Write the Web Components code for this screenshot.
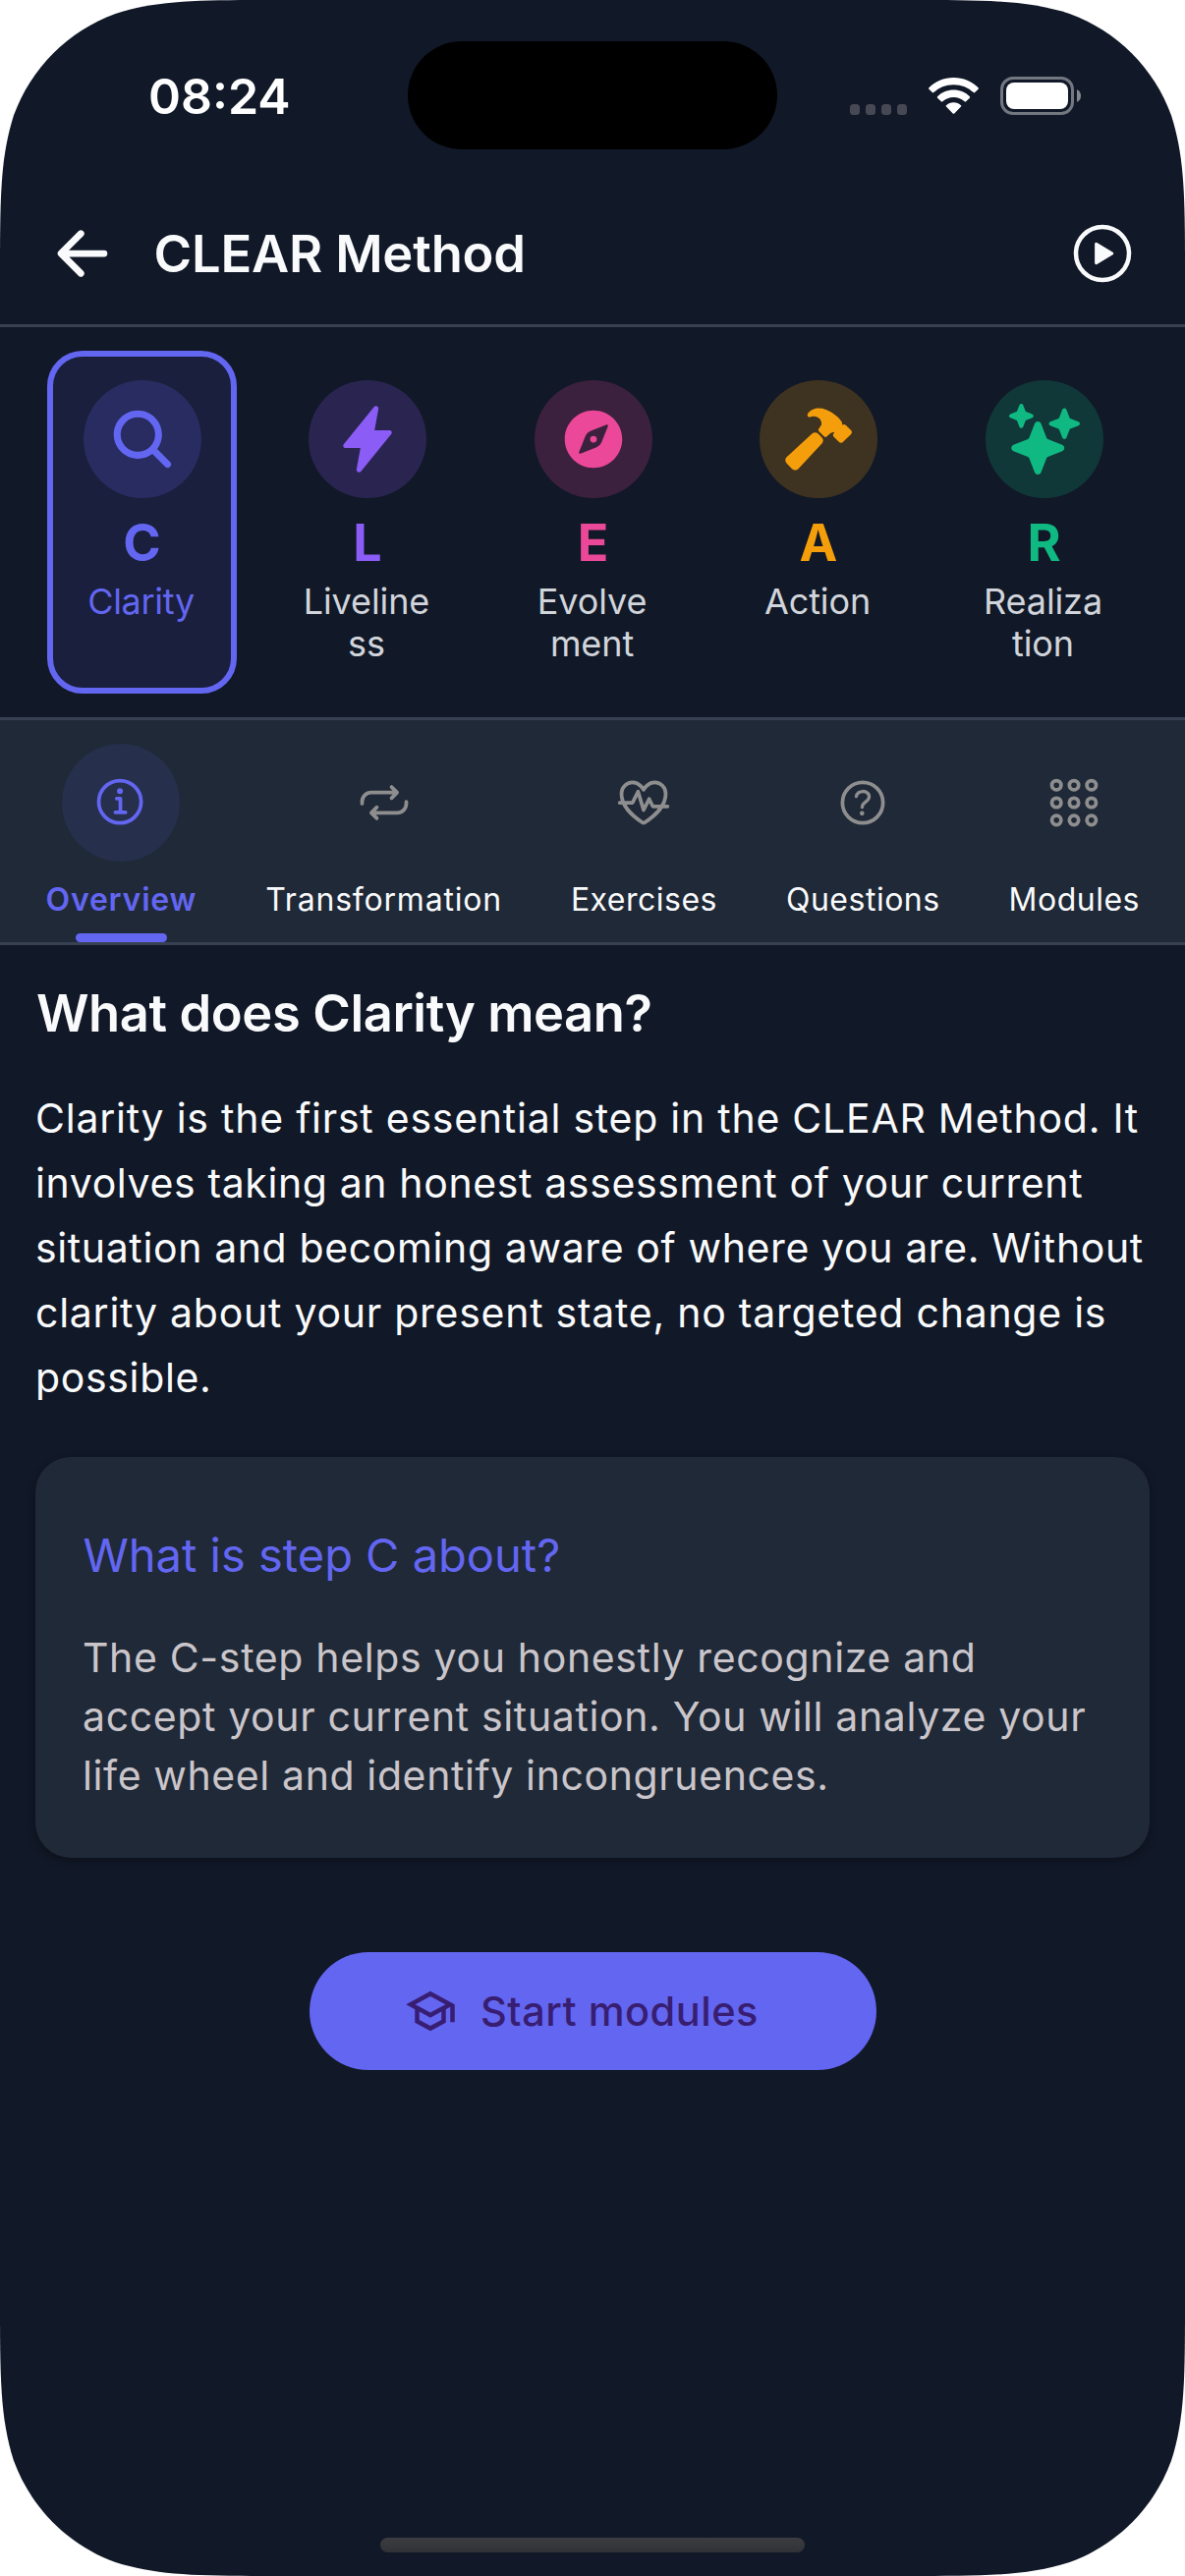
<!DOCTYPE html>
<html lang="en">
<head>
<meta charset="utf-8">
<title>CLEAR Method</title>
<style>
html, body { margin: 0; background: #fff; }
body { width: 1206px; height: 2622px; overflow: hidden; font-family: Inter, "Liberation Sans", sans-serif; }
.line { display: block; white-space: nowrap; }
</style>
</head>
<body>
<phone-screen>
  <status-bar slot="top" time="08:24"></status-bar>
  <app-header slot="top">CLEAR Method</app-header>
  <step-bar slot="top">
    <step-card icon="search" letter="C" color="#6366f1" active>Clarity</step-card>
    <step-card icon="flash" letter="L" color="#8b5cf6">Liveline<br>ss</step-card>
    <step-card icon="compass" letter="E" color="#ec4899">Evolve<br>ment</step-card>
    <step-card icon="hammer" letter="A" color="#f59e0b">Action</step-card>
    <step-card icon="sparkles" letter="R" color="#10b981">Realiza<br>tion</step-card>
  </step-bar>
  <tab-strip slot="top">
    <tab-item icon="info" active>Overview</tab-item>
    <tab-item icon="repeat" style="letter-spacing:.79px">Transformation</tab-item>
    <tab-item icon="fitness">Exercises</tab-item>
    <tab-item icon="help">Questions</tab-item>
    <tab-item icon="apps">Modules</tab-item>
  </tab-strip>
  <content-section heading="What does Clarity mean?">
    <span class="line" style="letter-spacing:.75px">Clarity is the first essential step in the CLEAR Method. It</span>
    <span class="line" style="letter-spacing:.62px">involves taking an honest assessment of your current</span>
    <span class="line" style="letter-spacing:.62px">situation and becoming aware of where you are. Without</span>
    <span class="line" style="letter-spacing:.74px">clarity about your present state, no targeted change is</span>
    <span class="line" style="letter-spacing:.65px">possible.</span>
  </content-section>
  <info-card heading="What is step C about?">
    <span class="line" style="letter-spacing:.65px">The C-step helps you honestly recognize and</span>
    <span class="line" style="letter-spacing:.63px">accept your current situation. You will analyze your</span>
    <span class="line" style="letter-spacing:.61px">life wheel and identify incongruences.</span>
  </info-card>
  <pill-button icon="school">Start modules</pill-button>
</phone-screen>

<script>
const define = (name, render) => customElements.define(name, class extends HTMLElement {
  connectedCallback() {
    if (this.shadowRoot) return;
    this.attachShadow({ mode: "open" }).innerHTML = render(this);
  }
});

const line = (w, body) => `<g fill="none" stroke="currentColor" stroke-width="${w}" stroke-linecap="round" stroke-linejoin="round">${body}</g>`;
const ICONS = {
  back: line(48, `<path d="M244 400L100 256l144-144M120 256h292"/>`),
  play: line(32, `<path d="M448 256c0-106-86-192-192-192S64 150 64 256s86 192 192 192 192-86 192-192z"/>`) +
    `<path d="M216.32 334.44l114.45-69.14a10.89 10.89 0 000-18.6l-114.45-69.14a10.78 10.78 0 00-16.32 9.31v138.26a10.78 10.78 0 0016.32 9.31z"/>`,
  search: `<path d="M456.69 421.39L362.6 327.3a173.81 173.81 0 0034.84-104.58C397.44 126.38 319.06 48 222.72 48S48 126.38 48 222.72s78.38 174.72 174.72 174.72A173.81 173.81 0 00327.3 362.6l94.09 94.09a25 25 0 0035.3-35.3zM97.92 222.72a124.8 124.8 0 11124.8 124.8 124.95 124.95 0 01-124.8-124.8z"/>`,
  flash: `<path d="M194.82 496a18.36 18.36 0 01-18.1-21.53v-.11L204.83 320H96a16 16 0 01-12.44-26.06L302.73 23a18.45 18.45 0 0132.8 13.71c0 .3-.08.59-.13.89L307.19 192H416a16 16 0 0112.44 26.06L209.24 489a18.45 18.45 0 01-14.42 7z"/>`,
  compass: `<circle cx="256" cy="256" r="24"/><path d="M256 48C141.31 48 48 141.31 48 256s93.31 208 208 208 208-93.31 208-208S370.69 48 256 48zm105.07 113.33l-46.88 117.2a64 64 0 01-35.66 35.66l-117.2 46.88a8 8 0 01-10.4-10.4l46.88-117.2a64 64 0 0135.66-35.66l117.2-46.88a8 8 0 0110.4 10.4z"/>`,
  hammer: `<path d="M280.16 242.79l-26.11-26.12a32 32 0 00-45.14-.12L27.38 384.08c-6.61 6.23-10.95 14.17-11.35 23.06a32.11 32.11 0 009.21 23.94l39 39.43a.46.46 0 00.07.07A32.29 32.29 0 0087 480h1.18c8.89-.33 17-4.64 23.32-11.26l168.68-180.8a32 32 0 00-.02-45.15z"/><path d="M490 190l-.31-.31-34.27-33.92a21.46 21.46 0 00-15.28-6.26 21.89 21.89 0 00-12.79 4.14c0-.43.06-.85.09-1.22.45-6.5 1.15-16.32-5.2-25.22a258 258 0 00-24.8-28.74.6.6 0 00-.08-.08c-13.32-13.12-42.31-37.83-86.72-55.94A139.55 139.55 0 00257.56 32C226 32 202 46.24 192.81 54.68a119.92 119.92 0 00-14.18 16.22 16 16 0 0018.65 24.34 74.45 74.45 0 018.58-2.63 63.46 63.46 0 0118.45-1.15c13.19 1.09 28.79 7.64 35.69 13.09 11.7 9.41 17.33 22.09 18.26 41.09.18 3.82-7.72 18.14-20 34.48a16 16 0 001.45 21l34.41 34.41a16 16 0 0022 .62c9.73-8.69 24.55-21.79 29.73-25 7.69-4.73 13.19-5.64 14.7-5.8a19.18 19.18 0 0111.29 2.38 1.24 1.24 0 01-.31.95l-1.82 1.73-.3.28a21.52 21.52 0 00.05 31.54l34.26 33.91a21.45 21.45 0 0015.28 6.25 21.7 21.7 0 0015.22-6.2l55.5-54.82c.19-.19.38-.39.56-.59A21.87 21.87 0 00490 190z"/>`,
  sparkles: `<path d="M208 512a24.84 24.84 0 01-23.34-16l-39.84-103.6a16.06 16.06 0 00-9.19-9.19L32 343.34a25 25 0 010-46.68l103.6-39.84a16.06 16.06 0 009.19-9.19L184.66 144a25 25 0 0146.68 0l39.84 103.6a16.06 16.06 0 009.19 9.19l103 39.63A25.49 25.49 0 01400 320.52a24.82 24.82 0 01-16 22.82l-103.6 39.84a16.06 16.06 0 00-9.19 9.19L231.34 496A24.84 24.84 0 01208 512zM88 176a14.67 14.67 0 01-13.69-9.4l-16.86-43.84a7.28 7.28 0 00-4.21-4.21L9.4 101.69a14.67 14.67 0 010-27.38l43.84-16.86a7.31 7.31 0 004.21-4.21L74.16 9.79A15 15 0 0186.23.11a14.67 14.67 0 0115.46 9.29l16.86 43.84a7.31 7.31 0 004.21 4.21l43.84 16.86a14.67 14.67 0 010 27.38l-43.84 16.86a7.28 7.28 0 00-4.21 4.21l-16.86 43.84A14.67 14.67 0 0188 176zM400 256a16 16 0 01-14.93-10.26l-22.84-59.37a8 8 0 00-4.6-4.6l-59.37-22.84a16 16 0 010-29.86l59.37-22.84a8 8 0 004.6-4.6l22.67-58.95a16.45 16.45 0 0113.17-10.57 16 16 0 0116.86 10.15l22.84 59.37a8 8 0 004.6 4.6l59.37 22.84a16 16 0 010 29.86l-59.37 22.84a8 8 0 00-4.6 4.6l-22.84 59.37A16 16 0 01400 256z"/>`,
  info: line(32, `<circle cx="248" cy="248" r="184"/><path d="M220 220h32v116M208 340h88"/>`) + `<circle cx="248" cy="156" r="26"/>`,
  repeat: line(32, `<path d="M320 120l48 48-48 48M352 168H144a80.24 80.24 0 00-80 80v16M192 392l-48-48 48-48M160 344h208a80.24 80.24 0 0080-80v-16"/>`),
  fitness: line(32, `<path d="M352.92 80C288 80 256 144 256 144s-32-64-96.92-64c-52.76 0-94.54 44.14-95.08 96.81-1.1 109.33 86.73 187.08 183 252.42a16 16 0 0018 0c96.26-65.34 184.09-143.09 183-252.42-.54-52.67-42.32-96.81-95.08-96.81zM48 256h112l48-96 48 160 48-96 32 64h128"/>`),
  help: line(28, `<circle cx="256" cy="256" r="176" stroke-width="32"/><path d="M200 202.29s.84-17.5 19.57-32.57C230.68 160.77 244 158.18 256 158c10.93-.14 20.69 1.67 26.53 4.45 10 4.76 29.47 16.38 29.47 41.09 0 26-17 37.81-36.37 50.8S251 281.43 251 296"/>`) + `<circle cx="250" cy="348" r="20"/>`,
  apps: line(32, [104, 256, 408].map(y => [104, 256, 408].map(x => `<circle cx="${x}" cy="${y}" r="40"/>`).join("")).join("")),
  school: `<g transform="scale(21.333)"><path d="M12 3L1 9l4 2.18v6L12 21l7-3.82v-6l2-1.09V17h2V9L12 3m6.82 6L12 12.72 5.18 9 12 5.28 18.82 9M17 16l-5 2.72L7 16v-3.73L12 15l5-2.73V16z"/></g>`
};

define("ui-icon", el => `
<style>:host{display:block;width:var(--size,72px);height:var(--size,72px);flex:none}svg{display:block;width:100%;height:100%}</style>
<svg viewBox="0 0 512 512" fill="currentColor">${ICONS[el.getAttribute("name")]}</svg>`);

define("phone-screen", () => {
  const w = 1206, h = 2622, r = 186;
  const a = 1.52866 * r, b = 1.08849 * r, c = .86841 * r, d = .63149 * r, e = .07491 * r, f = .37282 * r, g = .16906 * r;
  const path = `M${a} 0H${w - a}C${w - b} 0 ${w - c} 0 ${w - d} ${e}C${w - f} ${g} ${w - g} ${f} ${w - e} ${d}C${w} ${c} ${w} ${b} ${w} ${a}` +
    `V${h - a}C${w} ${h - b} ${w} ${h - c} ${w - e} ${h - d}C${w - g} ${h - f} ${w - f} ${h - g} ${w - d} ${h - e}C${w - c} ${h} ${w - b} ${h} ${w - a} ${h}` +
    `H${a}C${b} ${h} ${c} ${h} ${d} ${h - e}C${f} ${h - g} ${g} ${h - f} ${e} ${h - d}C0 ${h - c} 0 ${h - b} 0 ${h - a}` +
    `V${a}C0 ${b} 0 ${c} ${e} ${d}C${g} ${f} ${f} ${g} ${d} ${e}C${c} 0 ${b} 0 ${a} 0Z`;
  return `
<style>
:host{display:flex;flex-direction:column;width:${w}px;height:${h}px;background:#111827;color:#f9fafb;clip-path:path("${path}")}
main{flex:1;padding:36px 36px 0;display:flex;flex-direction:column}
footer{padding-bottom:24px;display:flex;justify-content:center}
.home{width:432px;height:15px;border-radius:8px;background:linear-gradient(#3c3c40,#303237)}
</style>
<slot name="top"></slot>
<main><slot></slot></main>
<footer><div class="home"></div></footer>`;
});

define("status-bar", el => `
<style>
:host{display:grid;grid-template-columns:415px 376px 1fr;height:184px;align-items:start}
.time{margin:68px 0 0 151px;font-size:50px;font-weight:600;line-height:60px;color:#fff}
.island{margin-top:42px;height:110px;border-radius:55px;background:#000}
.right{display:flex;align-items:flex-start;padding:78px 0 0 74px}
.dots{display:flex;gap:6px;margin-top:28px}
.dots i{width:10px;height:11px;border-radius:3.5px;background:#464853}
svg{display:block}
.wifi{margin:1px 0 0 22px}.battery{margin-left:22px}
</style>
<div class="time">${el.getAttribute("time")}</div>
<div class="island"></div>
<div class="right">
  <div class="dots"><i></i><i></i><i></i><i></i></div>
  <svg class="wifi" width="51" height="37" viewBox="0 0 51 37" fill="#fff">
    <path d="M25.5 0C35.4 0 44.3 3.9 50.6 10.2Q51.3 11 50.6 11.7L47.2 15.1Q46.5 15.8 45.7 15.1C40.500 10.2 33.4 7.2 25.500 7.2S10.500 10.2 5.3 15.1Q4.5 15.8 3.8 15.1L.4 11.7Q-.3 11 .4 10.2C6.7 3.9 15.6 0 25.500 0Z"/>
    <path d="M25.5 12.6C31.9 12.6 37.7 15.1 41.9 19.2Q42.6 20 41.9 20.7L38.1 24.3Q37.4 25 36.7 24.3C33.7 21.5 29.8 19.9 25.5 19.9S17.3 21.5 14.3 24.3Q13.6 25 12.9 24.3L9.1 20.7Q8.4 20 9.1 19.2C13.3 15.1 19.1 12.6 25.5 12.6Z"/>
    <path d="M25.5 25.3C28.4 25.3 31.1 26.4 33 28.2Q33.6 28.9 33 29.5L26.3 36.4Q25.5 37.2 24.7 36.4L18 29.5Q17.4 28.9 18 28.2C19.9 26.4 22.6 25.3 25.5 25.3Z"/>
  </svg>
  <svg class="battery" width="83" height="39" viewBox="0 0 83 39">
    <rect x="1.5" y="1.5" width="72" height="36" rx="11.5" fill="none" stroke="#737780" stroke-width="3"/>
    <rect x="6" y="6" width="63" height="27" rx="8" fill="#fff"/>
    <path d="M78 13Q82 15 82 19.5T78 26Z" fill="#858890"/>
  </svg>
</div>`);

define("app-header", () => `
<style>
:host{display:flex;align-items:center;box-sizing:border-box;height:149px;padding:1px 48px 0;border-bottom:3px solid #374151}
.title{flex:1;margin-left:36.5px;font-size:52.5px;font-weight:600;letter-spacing:-.2px;line-height:66px}
</style>
<ui-icon name="back"></ui-icon><div class="title"><slot></slot></div><ui-icon name="play"></ui-icon>`);

define("step-bar", () => `
<style>:host{display:flex;justify-content:space-between;box-sizing:border-box;height:400px;padding:24px 47px 24px 48px;border-bottom:3px solid #374151}</style>
<slot></slot>`);

define("step-card", el => {
  const color = el.getAttribute("color");
  return `
<style>
:host{display:flex;flex-direction:column;align-items:center;box-sizing:border-box;width:193px;height:349px;padding-top:24px;border:6px solid transparent;border-radius:36px;--c:${color}}
:host([active]){border-color:var(--c);background:${color}1a}
.disc{width:120px;height:120px;border-radius:50%;display:grid;place-items:center;background:${color}33;color:var(--c)}
.letter{margin-top:13px;font-size:52px;font-weight:700;line-height:66px;color:var(--c)}
.label{margin:4.5px 2px 0 0;font-size:36px;line-height:43px;text-align:center;color:#d1d5db;letter-spacing:-.1px}
:host([active]) .label{color:var(--c);letter-spacing:-.3px}
</style>
<div class="disc"><ui-icon name="${el.getAttribute("icon")}"></ui-icon></div>
<div class="letter">${el.getAttribute("letter")}</div>
<div class="label"><slot></slot></div>`;
});

define("tab-strip", () => `
<style>:host{display:flex;justify-content:space-between;box-sizing:border-box;height:229px;padding:24px 46px 0 46.5px;background:#1f2937;border-bottom:3px solid #374151}</style>
<slot></slot>`);

define("tab-item", el => `
<style>
:host{display:flex;flex-direction:column;align-items:center;font-size:32px;letter-spacing:.5px}
:host([active]){letter-spacing:.8px}
.disc{width:120px;height:120px;border-radius:50%;display:grid;place-items:center;color:#8e8e8f;--size:60px}
:host([active]) .disc{background:#262f4b;color:#6366f1}
.label{margin-top:17px;line-height:44px;white-space:nowrap}
:host([active]) .label{color:#6366f1;font-weight:600}
.mark{margin-top:auto;width:93px;height:9px;border-radius:4.5px}
:host([active]) .mark{background:#6366f1}
</style>
<div class="disc"><ui-icon name="${el.getAttribute("icon")}"></ui-icon></div>
<div class="label"><slot></slot></div>
<div class="mark"></div>`);

define("content-section", el => `
<style>
:host{display:block}
h2{margin:0 0 0 1px;font-size:52.5px;font-weight:600;line-height:66px;letter-spacing:-.43px}
p{margin:41px 0 0;font-size:41px;line-height:66px}
</style>
<h2>${el.getAttribute("heading")}</h2><p><slot></slot></p>`);

define("info-card", el => `
<style>
:host{display:block;box-sizing:border-box;margin-top:48px;height:408px;padding:64px 48px 54px;border-radius:36px;background:#1f2937;box-shadow:0 3px 9px rgba(0,0,0,.3)}
h3{margin:0 0 0 .5px;font-size:47px;font-weight:400;line-height:72px;color:#6366f1}
p{margin:38px 0 0;font-size:41px;line-height:60px;color:#cac5ca}
</style>
<h3>${el.getAttribute("heading")}</h3><p><slot></slot></p>`);

define("pill-button", el => `
<style>
:host{display:flex;align-self:center;align-items:center;box-sizing:border-box;width:577px;height:120px;margin-top:96px;padding-left:96px;gap:24.5px;border-radius:60px;background:#6366f1;color:#381e72;--size:54px}
span{font-size:41.5px;font-weight:500;letter-spacing:.5px;line-height:60px;white-space:nowrap}
</style>
<ui-icon name="${el.getAttribute("icon")}"></ui-icon><span><slot></slot></span>`);
</script>
</body>
</html>
